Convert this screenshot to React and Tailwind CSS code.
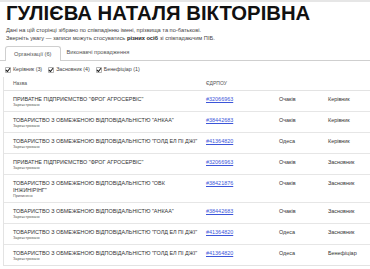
const rows = [
  { name: 'ПРИВАТНЕ ПІДПРИЄМСТВО "ФРОГ АГРОСЕРВІС"', status: "Зареєстровано", code: "32066963", city: "Очаків", role: "Керівник" },
  { name: 'ТОВАРИСТВО З ОБМЕЖЕНОЮ ВІДПОВІДАЛЬНІСТЮ "АНКАА"', status: "Зареєстровано", code: "38442683", city: "Очаків", role: "Керівник" },
  { name: 'ТОВАРИСТВО З ОБМЕЖЕНОЮ ВІДПОВІДАЛЬНІСТЮ "ГОЛД ЕЛ ПІ ДЖІ"', status: "Зареєстровано", code: "41364820", city: "Одеса", role: "Керівник" },
  { name: 'ПРИВАТНЕ ПІДПРИЄМСТВО "ФРОГ АГРОСЕРВІС"', status: "Зареєстровано", code: "32066963", city: "Очаків", role: "Засновник" },
  { name: 'ТОВАРИСТВО З ОБМЕЖЕНОЮ ВІДПОВІДАЛЬНІСТЮ "ОВК ІНЖИНІРІНГ"', status: "Припинено", code: "38421876", city: "Очаків", role: "Засновник", wrap: true },
  { name: 'ТОВАРИСТВО З ОБМЕЖЕНОЮ ВІДПОВІДАЛЬНІСТЮ "АНКАА"', status: "Зареєстровано", code: "38442683", city: "Очаків", role: "Засновник" },
  { name: 'ТОВАРИСТВО З ОБМЕЖЕНОЮ ВІДПОВІДАЛЬНІСТЮ "ГОЛД ЕЛ ПІ ДЖІ"', status: "Зареєстровано", code: "41364820", city: "Одеса", role: "Засновник" },
  { name: 'ТОВАРИСТВО З ОБМЕЖЕНОЮ ВІДПОВІДАЛЬНІСТЮ "ГОЛД ЕЛ ПІ ДЖІ"', status: "Зареєстровано", code: "41364820", city: "Одеса", role: "Бенефіціар" },
]

// ── Checkbox ──────────────────────────────────────────────────────────────────
function Check({ label }) {
  return (
    <span className="flex items-center gap-[2px]">
      <svg viewBox="0 0 12 12" className="w-[6px] h-[6px]" fill="none">
        <rect x="0.75" y="0.75" width="10.5" height="10.5" rx="1.5" fill="#fff" stroke="#888" strokeWidth="1.5" />
        <path d="M2.5 6.5 L5 9 L9.5 3" stroke="#222" strokeWidth="2.2" strokeLinecap="round" strokeLinejoin="round" />
      </svg>
      <span>{label}</span>
    </span>
  )
}

export default function App() {
  return (
    <div className="w-[370px] h-[269px] overflow-hidden bg-white border-t-2 border-[#e6e6e6] font-['Liberation_Sans',Arial,sans-serif]">

      {/* ── Title ── */}
      <h1 className="px-[6px] pt-[3px] text-[20.3px] leading-[17px] font-bold text-[#111] whitespace-nowrap">
        ГУЛІЄВА НАТАЛЯ ВІКТОРІВНА
      </h1>
      <p className="mt-[4px] px-[6px] text-[5.7px] leading-[8px] text-[#444] whitespace-nowrap">
        Дані на цій сторінці зібрано по співпадінню імені, прізвища та по-батькові.<br />
        Зверніть увагу — записи можуть стосуватись <b className="text-[#222]">різних осіб</b> зі співпадаючим ПІБ.
      </p>

      {/* ── Tabs ── */}
      <div className="mt-[4px] px-[5px] flex items-end border-b border-[#cfcfcf] text-[5.7px] text-[#555] h-[15px]">
        <div className="h-[15px] px-[8px] flex items-center border border-b-0 border-[#cfcfcf] rounded-t-[3px] bg-white -mb-px">
          Організації (6)
        </div>
        <div className="h-[15px] px-[6px] flex items-center">Виконавчі провадження</div>
      </div>

      {/* ── Filters ── */}
      <div className="mt-[5px] px-[5px] flex items-center gap-[6px] text-[5.3px] text-[#444]">
        <Check label="Керівник (3)" />
        <Check label="Засновник (4)" />
        <Check label="Бенефіціар (1)" />
      </div>

      {/* ── Table ── */}
      <div className="mt-[3px] ml-[3px] border-l border-b border-[#e3e3e3] text-[5.45px] text-[#333]">
        <div className="grid grid-cols-[202px_73px_49px_1fr] h-[14px] items-center text-[#555] text-[5px] border-b border-[#e3e3e3]">
          <div className="pl-[9px]">Назва</div>
          <div>ЄДРПОУ</div>
          <div></div>
          <div></div>
        </div>
        {rows.map((r, i) => (
          <div key={i} className="grid grid-cols-[202px_73px_49px_1fr] border-b border-[#e6e6e6] last:border-b-0 pt-[5px] pb-[4px]">
            <div className="pl-[9px] pr-[2px]">
              <div className="leading-[7px]">
                {r.wrap ? <>ТОВАРИСТВО З ОБМЕЖЕНОЮ ВІДПОВІДАЛЬНІСТЮ "ОВК<br />ІНЖИНІРІНГ"</> : <span className="whitespace-nowrap">{r.name}</span>}
              </div>
              <div className="text-[3.8px] leading-[4px] text-[#555]">{r.status}</div>
            </div>
            <div className="leading-[7px]"><span className="text-[#3b55d9] underline">#{r.code}</span></div>
            <div className="leading-[7px]">{r.city}</div>
            <div className="leading-[7px]">{r.role}</div>
          </div>
        ))}
      </div>

    </div>
  )
}
